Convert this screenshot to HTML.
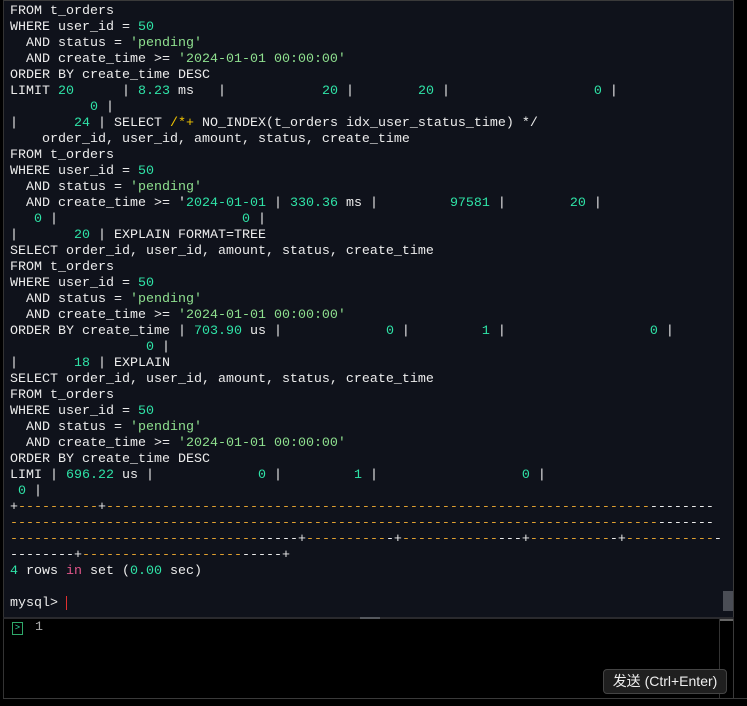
<!DOCTYPE html>
<html><head><meta charset="utf-8"><style>
html,body{margin:0;padding:0;background:#000;width:747px;height:706px;overflow:hidden}
#term{position:absolute;left:3px;top:0;width:731px;height:617px;background:#0f121b;border-top:1px solid #3a3a3a;border-left:1px solid #333;border-right:1px solid #3a3a3a;box-sizing:border-box;overflow:hidden}
pre{margin:0;position:absolute;left:6px;top:3px;font-family:"Liberation Mono",monospace;font-size:13.33px;line-height:16px;color:#ececec;white-space:pre}
.n{color:#2fe3a7}.s{color:#8fe08f}.o{color:#e0a030}.y{color:#f2c500}.k{color:#e0558a}
#sb{position:absolute;left:719px;top:590px;width:14px;height:20px;background:#4a4d55}
#cur{position:absolute;left:66px;top:596px;width:1px;height:14px;background:#e03030}
#sep{position:absolute;left:3px;top:617px;width:731px;height:2px;background:#2a2a2e}
#handle{position:absolute;left:360px;top:617px;width:20px;height:2px;background:#55585e}
#inp{position:absolute;left:3px;top:619px;width:731px;height:79px;background:#000;border-left:1px solid #333;border-right:1px solid #3a3a3a;box-sizing:border-box}
#inscroll{position:absolute;left:719px;top:619px;width:1px;height:79px;background:#333}
#inthumb{position:absolute;left:720px;top:619px;width:13px;height:2px;background:#666}
#bot{position:absolute;left:3px;top:698px;width:744px;height:1px;background:#3a3a3a}
#ic{position:absolute;left:12px;top:622px;width:9px;height:11px;border:1px solid #2fa86a;color:#2fe3a7;font:9px "Liberation Mono",monospace;line-height:11px;text-align:center}
#one{position:absolute;left:35px;top:620px;color:#aaa;font:13.33px "Liberation Mono",monospace}
#btn{position:absolute;left:603px;top:669px;width:124px;height:25px;background:#1f1f1f;border:1px solid #444;border-radius:4px;box-sizing:border-box;color:#eee;font:14px "Liberation Sans","Noto Sans CJK SC",sans-serif;line-height:23px;text-align:center}
</style></head><body>
<div id="term"><pre>FROM t_orders
WHERE user_id = <span class="n">50</span>
  AND status = <span class="s">'pending'</span>
  AND create_time &gt;= <span class="s">'2024-01-01 00:00:00'</span>
ORDER BY create_time DESC
LIMIT <span class="n">20</span>      | <span class="n">8.23</span> ms   |            <span class="n">20</span> |        <span class="n">20</span> |                  <span class="n">0</span> |
          <span class="n">0</span> |
|       <span class="n">24</span> | SELECT <span class="y">/*+</span> NO_INDEX(t_orders idx_user_status_time) */
    order_id, user_id, amount, status, create_time
FROM t_orders
WHERE user_id = <span class="n">50</span>
  AND status = <span class="s">'pending'</span>
  AND create_time &gt;= '<span class="n">2024-01-01</span> | <span class="n">330.36</span> ms |         <span class="n">97581</span> |        <span class="n">20</span> |
   <span class="n">0</span> |                       <span class="n">0</span> |
|       <span class="n">20</span> | EXPLAIN FORMAT=TREE
SELECT order_id, user_id, amount, status, create_time
FROM t_orders
WHERE user_id = <span class="n">50</span>
  AND status = <span class="s">'pending'</span>
  AND create_time &gt;= <span class="s">'2024-01-01 00:00:00'</span>
ORDER BY create_time | <span class="n">703.90</span> us |             <span class="n">0</span> |         <span class="n">1</span> |                  <span class="n">0</span> |
                 <span class="n">0</span> |
|       <span class="n">18</span> | EXPLAIN
SELECT order_id, user_id, amount, status, create_time
FROM t_orders
WHERE user_id = <span class="n">50</span>
  AND status = <span class="s">'pending'</span>
  AND create_time &gt;= <span class="s">'2024-01-01 00:00:00'</span>
ORDER BY create_time DESC
LIMI | <span class="n">696.22</span> us |             <span class="n">0</span> |         <span class="n">1</span> |                  <span class="n">0</span> |
 <span class="n">0</span> |
+<span class="o">----------</span>+<span class="o">--------------------------------------------------------------------</span>--------
<span class="o">---------------------------------------------------------------------------------</span>-------
<span class="o">-------------------------------</span>-----+<span class="o">----------</span>-+<span class="o">------------</span>---+<span class="o">----------</span>-+<span class="o">-----------</span>-
--------+<span class="o">--------------------</span>-----+
<span class="n">4</span> rows <span class="k">in</span> set (<span class="n">0.00</span> sec)

mysql&gt; </pre><div id="sb"></div></div>
<div id="cur"></div>
<div id="sep"></div><div id="handle"></div>
<div id="inp"></div><div id="inscroll"></div><div id="inthumb"></div>
<div id="ic">&gt;</div><div id="one">1</div>
<div id="btn">发送 (Ctrl+Enter)</div>
<div id="bot"></div>
</body></html>
